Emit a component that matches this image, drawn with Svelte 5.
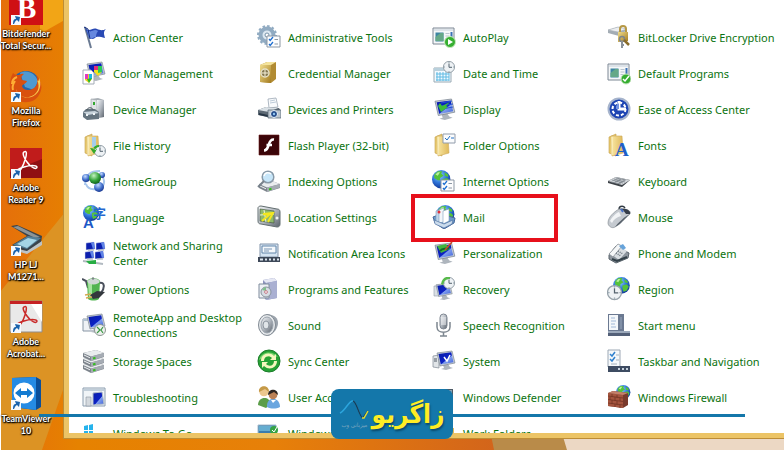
<!--
  App.svelte
  Desktop with a shortcut column, the "All Control Panel Items" window
  and the Zagrio host banner along the bottom.
-->
<script lang="ts">
  interface Glyph {
    text: string;
    x: number;
    y: number;
    size: number;
    fill: string;
    font: string;
  }

  interface Item {
    label: string;
    icon: string;
    marked?: boolean;
  }

  const shortcuts = [
    { lines: ['Bitdefender', 'Total Secur...'], icon: 'bitdefender' },
    { lines: ['Mozilla', 'Firefox'], icon: 'firefox' },
    { lines: ['Adobe', 'Reader 9'], icon: 'reader' },
    { lines: ['HP LJ', 'M1271...'], icon: 'scanner' },
    { lines: ['Adobe', 'Acrobat...'], icon: 'acrobat' },
    { lines: ['TeamViewer', '10'], icon: 'teamviewer' },
  ];

  // Filled row by row, four to a row
  const items: Item[] = [
    { label: 'Action Center', icon: 'flag' },
    { label: 'Administrative Tools', icon: 'admin' },
    { label: 'AutoPlay', icon: 'autoplay' },
    { label: 'BitLocker Drive Encryption', icon: 'bitlocker' },
    { label: 'Color Management', icon: 'color' },
    { label: 'Credential Manager', icon: 'safe' },
    { label: 'Date and Time', icon: 'date' },
    { label: 'Default Programs', icon: 'defaults' },
    { label: 'Device Manager', icon: 'device' },
    { label: 'Devices and Printers', icon: 'printers' },
    { label: 'Display', icon: 'display' },
    { label: 'Ease of Access Center', icon: 'ease' },
    { label: 'File History', icon: 'history' },
    { label: 'Flash Player (32-bit)', icon: 'flash' },
    { label: 'Folder Options', icon: 'folderopts' },
    { label: 'Fonts', icon: 'fonts' },
    { label: 'HomeGroup', icon: 'homegroup' },
    { label: 'Indexing Options', icon: 'indexing' },
    { label: 'Internet Options', icon: 'internet' },
    { label: 'Keyboard', icon: 'keyboard' },
    { label: 'Language', icon: 'language' },
    { label: 'Location Settings', icon: 'location' },
    { label: 'Mail', icon: 'mail', marked: true },
    { label: 'Mouse', icon: 'mouse' },
    { label: 'Network and Sharing Center', icon: 'network' },
    { label: 'Notification Area Icons', icon: 'notify' },
    { label: 'Personalization', icon: 'personal' },
    { label: 'Phone and Modem', icon: 'phone' },
    { label: 'Power Options', icon: 'power' },
    { label: 'Programs and Features', icon: 'programs' },
    { label: 'Recovery', icon: 'recovery' },
    { label: 'Region', icon: 'region' },
    { label: 'RemoteApp and Desktop Connections', icon: 'remote' },
    { label: 'Sound', icon: 'sound' },
    { label: 'Speech Recognition', icon: 'speech' },
    { label: 'Start menu', icon: 'start' },
    { label: 'Storage Spaces', icon: 'storage' },
    { label: 'Sync Center', icon: 'sync' },
    { label: 'System', icon: 'system' },
    { label: 'Taskbar and Navigation', icon: 'taskbar' },
    { label: 'Troubleshooting', icon: 'trouble' },
    { label: 'User Accounts', icon: 'users' },
    { label: 'Windows Defender', icon: 'defender' },
    { label: 'Windows Firewall', icon: 'firewall' },
    { label: 'Windows To Go', icon: 'togo' },
    { label: 'Windows Update', icon: 'update' },
    { label: 'Work Folders', icon: 'work' },
  ];

  // Letters that sit on top of an icon
  const glyphs: Record<string, Glyph[]> = {
    bitdefender: [{ text: 'B', x: 8, y: 26, size: 29, fill: '#fff', font: 'Liberation Serif' }],
    fonts: [{ text: 'A', x: 8, y: 23, size: 19, fill: '#1f5fc6', font: 'Liberation Serif' }],
    language: [
      { text: 'A', x: 1, y: 23, size: 15, fill: '#1d59c7', font: 'Liberation Sans' },
      { text: '字', x: 11, y: 13, size: 13, fill: '#2467cf', font: 'Noto Sans CJK SC' },
    ],
  };
</script>

{#snippet picture(icon: string, cls: string)}
  <svg class={cls} aria-hidden="true">
    <use href="#{icon}" />
    {#each glyphs[icon] ?? [] as g}
      <text x={g.x} y={g.y} font-family={g.font} font-size={g.size} font-weight="700" fill={g.fill}>{g.text}</text>
    {/each}
    {#if cls === 'shortcut-icon'}
      <use href="#p-arrow" transform="translate(2 23)" />
    {/if}
  </svg>
{/snippet}

<svg class="sprite" aria-hidden="true">
  <defs>
    <linearGradient id="steel" x1="0" y1="0" x2="1" y2="1">
      <stop offset="0" stop-color="#f4f6f8" /><stop offset="0.5" stop-color="#b0b6be" /><stop offset="1" stop-color="#5c646d" />
    </linearGradient>
    <linearGradient id="screen" x1="0" y1="0" x2="1" y2="1">
      <stop offset="0" stop-color="#0a1da8" /><stop offset="0.55" stop-color="#0c22c4" /><stop offset="0.6" stop-color="#7f9dee" /><stop offset="1" stop-color="#3c5fd8" />
    </linearGradient>
    <linearGradient id="manila" x1="0" y1="0" x2="1" y2="0">
      <stop offset="0" stop-color="#f9e8a6" /><stop offset="1" stop-color="#dfb95a" />
    </linearGradient>
    <linearGradient id="gold" x1="0" y1="0" x2="1" y2="1">
      <stop offset="0" stop-color="#f0dc8c" /><stop offset="1" stop-color="#a37a1e" />
    </linearGradient>
    <radialGradient id="ocean" cx="0.4" cy="0.3" r="0.8">
      <stop offset="0" stop-color="#8fd0ff" /><stop offset="0.5" stop-color="#2e74d8" /><stop offset="1" stop-color="#0a2688" />
    </radialGradient>
    <radialGradient id="blueball" cx="0.4" cy="0.3" r="0.7">
      <stop offset="0" stop-color="#c5dcff" /><stop offset="0.6" stop-color="#4471cc" /><stop offset="1" stop-color="#1b3a92" />
    </radialGradient>
    <radialGradient id="greenball" cx="0.4" cy="0.3" r="0.7">
      <stop offset="0" stop-color="#c4f3c0" /><stop offset="0.6" stop-color="#36a53c" /><stop offset="1" stop-color="#12631c" />
    </radialGradient>

    <!-- shared parts -->
    <g id="p-globe">
      <circle cx="8" cy="8" r="8" fill="url(#ocean)" />
      <path d="M2 4 5 1 9 1 8 3 10 5 7 7 7 9 5 9 2 7zM9 8l4-1 2 2-2 4-3 1-1-3zM11 2l3 2v2l-3-1z" fill="#55c23a" />
      <path d="M3 4 5 2 7 2 5 5z" fill="#b9f09c" />
    </g>
    <g id="p-monitor">
      <path d="M6 14l5-1 2 3 3 1-7 2-5-1 3-1z" fill="#aeb5bd" />
      <path d="M0 2 15 0 18 12 3 15z" fill="#c7ced6" stroke="#6e7986" stroke-width="0.6" />
      <path d="M1.500 3 14.200 1.300 16.500 11.200 3.800 13.600z" fill="url(#screen)" />
    </g>
    <g id="p-clock">
      <circle cx="6" cy="6" r="5.600" fill="#eef2f5" stroke="#97a2aa" />
      <path d="M6 2.500V6.300H9" fill="none" stroke="#54636e" />
      <path d="M6 1v1M6 10v1M1 6h1M10 6h1" stroke="#8fa0aa" />
    </g>
    <g id="p-list">
      <path d="M0 0h13v11H0z" fill="#fdfdfe" stroke="#8c97a4" />
      <path d="M2 3l1.200 1.500L6 1M2 8l1.200 1.500L6 6" fill="none" stroke="#1f6fd0" stroke-width="1.300" />
      <path d="M7.500 3.500H11M7.500 8H11" stroke="#8d98a5" />
    </g>
    <g id="p-window">
      <path d="M1 3h21v16H1z" fill="#f5f7f8" stroke="#7c8794" />
      <path d="M2 4h19v2H2z" fill="#dde3e9" />
      <path d="M3.500 7.500h8v9h-8z" fill="#3d85a2" /><path d="M3.500 12l5-4h3v8h-8z" fill="#65a887" />
      <path d="M13.500 8.500h4M13.500 11h4M13.500 13.500h3" stroke="#b8c4cf" />
      <path d="M18.500 7h2v8h-2z" fill="#3a71b5" />
    </g>
    <g id="p-folder">
      <path d="M1 3 8 0v22L1 19z" fill="#e9ca72" stroke="#c59e46" stroke-width="0.600" />
      <path d="M3 2h11l1 17-11 3z" fill="url(#manila)" stroke="#cda958" stroke-width="0.600" />
      <path d="M4 3v18" stroke="#fff6cb" />
    </g>
    <g id="p-pc">
      <path d="M0 1l8-1 1 7-9 1z" fill="#0c1fae" stroke="#d6deee" stroke-width="0.500" /><path d="M5 1l3-1 1 6-2 1z" fill="#5f83e6" />
      <path d="M2 8h6" stroke="#9ba4b0" />
    </g>
    <g id="p-disk">
      <path d="M0 3 13 0l8 3v4L8 11 0 7z" fill="#7d848c" />
      <path d="M0 3 13 0l8 3L8 6.500z" fill="#e9ecee" />
      <path d="M8 6.500 21 3v3.500L8 11z" fill="#a5abb3" />
      <path d="M1 5l6 2.800" stroke="#eef0f2" /><path d="M10 8.500l2.500-.7" stroke="#36bd20" stroke-width="2" />
    </g>
    <g id="p-arrow">
      <path d="M0 0h10v10H0z" fill="#f6f9fd" />
      <path d="M2 9C2 5 3 4 5 4L4 1l5 1-1 5-2-2C4 6 4 7 3 9z" fill="#1962ac" />
    </g>
  </defs>

  <!-- control panel icons -->
  <symbol id="flag" viewBox="0 0 24 24">
    <path d="M3 2 9 23" stroke="#6a7a92" stroke-width="2" />
    <path d="M3 3C8 8 10 2 15 4c3 1 5 2 9 0-3 3-2 5-1 9-5-1-8-2-10 0-3 2-5 0-6 0z" fill="#2949b4" />
    <path d="M5 5c5 4 6-2 11 1-2 3-2 5-2 6-3 0-4 3-7 1z" fill="#6688df" />
    <path d="M2 2l4 2 2 10" fill="none" stroke="#152f80" />
  </symbol>
  <symbol id="color" viewBox="0 0 24 24">
    <use href="#p-monitor" transform="translate(5 1)" />
    <path d="M12 5h8v6l-4 4-4-4z" fill="#f4e11d" /><path d="M12 5h4v4h-4z" fill="#e0307a" /><path d="M16 5h4v6l-4 1z" fill="#2bcb5a" />
    <path d="M1 9h8l3 3v11H1z" fill="#fff" stroke="#a3abb5" />
    <path d="M3 13h7v5l-3 4-4-3z" fill="#f4d01d" /><path d="M3 13h3v5H3z" fill="#e23cc0" /><path d="M7 13h3v5l-3 1z" fill="#17b7e8" /><path d="M5 18l5-1-3 5z" fill="#26b535" />
  </symbol>
  <symbol id="device" viewBox="0 0 24 24">
    <path d="M9 2l7-1 6 2v17l-7 1-6-3z" fill="#a9b0b6" /><path d="M9 2l6 1v17l-6-3z" fill="#e0e3e5" stroke="#99a0a6" stroke-width="0.600" /><path d="M15 3h7v17l-7 1z" fill="url(#steel)" />
    <path d="M12 5v3" stroke="#35a832" stroke-width="2" />
    <path d="M1 15l3-3h9l4 3v7l-12 1-4-3z" fill="#65747f" /><path d="M1 15l12-1 4 2-11 2z" fill="#c9d4dc" />
    <path d="M5 13c0-3 6-3 6 0" fill="none" stroke="#4b5660" /><path d="M4 18h2M11 17h2" stroke="#eff4f7" stroke-width="2" />
  </symbol>
  <symbol id="history" viewBox="0 0 24 24">
    <use href="#p-folder" transform="translate(2 1)" />
    <path d="M10 4h4v10h-4z" fill="#a5cdec" />
    <use href="#p-clock" transform="translate(12 12)" />
    <path d="M8 15l4 6 3-5zM11 16c1-3 3-4 6-4v2c-2 0-3 1-3 3z" fill="#35a92b" />
  </symbol>
  <symbol id="homegroup" viewBox="0 0 24 24">
    <path d="M3 16C4 5 8 2 18 2M20 7c4 5 2 10-3 15M14 20C7 21 5 18 4 15" fill="none" stroke="#a8c6ec" stroke-width="2" />
    <circle cx="4" cy="9" r="4" fill="url(#blueball)" /><circle cx="20" cy="6" r="3" fill="url(#blueball)" />
    <circle cx="17" cy="18" r="5" fill="url(#blueball)" /><circle cx="13" cy="9" r="6" fill="url(#greenball)" />
  </symbol>
  <symbol id="language" viewBox="0 0 24 24">
    <use href="#p-globe" transform="translate(1 0)" />
  </symbol>
  <symbol id="network" viewBox="0 0 24 24">
    <use href="#p-pc" transform="translate(4 1)" /><use href="#p-pc" transform="translate(14 1)" />
    <use href="#p-pc" transform="translate(3 10)" /><use href="#p-pc" transform="translate(13 10)" />
    <path d="M1 20l20 3" stroke="#b2bac1" stroke-width="2" /><path d="M4 20l10-1v4l-7 0z" fill="#27ad43" />
  </symbol>
  <symbol id="power" viewBox="0 0 24 24">
    <path d="M0 2l4 2 2 7M17 6c6-2 6 5 2 10" fill="none" stroke="#4a505c" stroke-width="2" />
    <path d="M5 5c0-5 13-5 13 0l-1 17c-3 2-8 2-11 0z" fill="#51b450" /><path d="M6 6h4v15l-3-1z" fill="#a5e59d" />
    <ellipse cx="11.500" cy="4.500" rx="6" ry="3" fill="#cfd7d5" /><circle cx="11" cy="1.500" r="1.200" fill="#798684" />
    <path d="M8 18l7-4 8 1-6 6-6 1z" fill="#34383d" /><path d="M3 18l6-1M4 21l6-1" stroke="#d5a952" stroke-width="1.500" />
  </symbol>
  <symbol id="remote" viewBox="0 0 24 24">
    <path d="M1 6h14v12H1z" fill="#eff2f5" stroke="#8795a4" /><path d="M1 6h14v2H1z" fill="#b2c2d1" />
    <use href="#p-monitor" transform="translate(5 1)" />
    <circle cx="18" cy="17" r="5.500" fill="#edf0ee" stroke="#8b9690" /><path d="M15 14l3 3-3 3M21 14l-2 3 2 3" fill="none" stroke="#3c9845" stroke-width="1.200" />
  </symbol>
  <symbol id="storage" viewBox="0 0 24 24">
    <use href="#p-disk" transform="translate(1 13)" /><use href="#p-disk" transform="translate(1 7)" /><use href="#p-disk" transform="translate(1 1)" />
  </symbol>
  <symbol id="trouble" viewBox="0 0 24 24">
    <path d="M1 3h22v18H1z" fill="#f0f4f7" stroke="#8b9daf" /><path d="M2 4h20v2H2z" fill="#c1ced9" />
    <path d="M4 12h5v9H4z" fill="#d4d9de" stroke="#8b949e" stroke-width="0.600" /><path d="M11 8l9-1 2 12-11 1z" fill="url(#screen)" stroke="#b1bcc9" />
  </symbol>
  <symbol id="togo" viewBox="0 0 24 24">
    <path d="M2 5l4-1v5H2zM7 4l4-1v6H7zM2 10h4v5l-4-1zM7 10h4v6l-4-1z" fill="#26b3ec" />
  </symbol>

  <symbol id="admin" viewBox="0 0 24 24">
    <circle cx="10" cy="10" r="6.500" fill="#dbe7f1" stroke="#91abc2" stroke-width="4" />
    <circle cx="10" cy="10" r="9" fill="none" stroke="#91abc2" stroke-width="2" stroke-dasharray="2.500 2.200" />
    <circle cx="10" cy="10" r="2" fill="#fff" stroke="#7591a8" />
    <use href="#p-list" transform="translate(10 11)" />
  </symbol>
  <symbol id="safe" viewBox="0 0 24 24">
    <path d="M3 4 10 1h9v17l-5 4-11-1z" fill="#b18b33" /><path d="M3 4h11v18l-11-1z" fill="url(#gold)" /><path d="M3 4 10 1h9l-5 3z" fill="#f4e39c" />
    <circle cx="8" cy="12" r="4" fill="#847852" stroke="#e8e2c7" stroke-width="1.500" /><path d="M5 12h6M8 9v6" stroke="#f8f2d8" />
  </symbol>
  <symbol id="printers" viewBox="0 0 24 24">
    <path d="M11 2l8-1 2 9-9 1z" fill="#f8fafc" stroke="#8f9caa" stroke-width="0.700" /><path d="M13 4l5-1M13 6l6-1" stroke="#bccad7" />
    <path d="M1 13l8-3 13 1 2 3v6l-9 1-14-3z" fill="#5d6974" /><path d="M1 13l8-3 12 1-9 4z" fill="#d9e0e5" /><path d="M2 16l9 2v2l-9-2z" fill="#283746" />
    <path d="M11 13h13v8H11z" fill="#bdc6ce" stroke="#4e5e6d" stroke-width="0.700" /><circle cx="17" cy="17" r="3.500" fill="#244c8b" stroke="#edf4f9" /><circle cx="17" cy="17" r="1.200" fill="#90c4f0" />
  </symbol>
  <symbol id="flash" viewBox="0 0 24 24">
    <path d="M2 2h20v20H2z" fill="#3b0508" stroke="#65171a" stroke-width="0.600" />
    <path d="M17 6.500c-4-.5-4.500 3-5.500 6s-2 5-4.500 5M9.500 12H15" fill="none" stroke="#fff" stroke-width="2.600" />
  </symbol>
  <symbol id="indexing" viewBox="0 0 24 24">
    <use href="#p-disk" transform="translate(2 12)" />
    <circle cx="11" cy="8" r="5.800" fill="#c7e6f9" stroke="#899aa8" stroke-width="1.500" /><path d="M7 7c1-4 5-4 7-2" fill="none" stroke="#fff" stroke-width="1.500" />
    <path d="M7 12l-6 6" stroke="#77818b" stroke-width="2" />
  </symbol>
  <symbol id="location" viewBox="0 0 24 24">
    <path d="M1 3c0-1 1-2 3-2l16 3c2 0 3 1 3 3v12c0 2-1 3-3 3L4 19c-2 0-3-1-3-3z" fill="url(#steel)" stroke="#636e70" />
    <path d="M3 4l14 2v12L3 16z" fill="#8fb96c" stroke="#40503c" stroke-width="0.600" /><path d="M3 10l14-1M7 5l2 12" stroke="#eef6e0" />
    <path d="M5 16l7-6-6-1 10-1-5 9" fill="none" stroke="#f3e720" stroke-width="2" /><circle cx="20" cy="13" r="1.500" fill="#eff2f2" />
  </symbol>
  <symbol id="notify" viewBox="0 0 24 24">
    <path d="M3 3h18v13H3z" fill="#d5e4f2" stroke="#8294ab" /><path d="M5 5h14v7H5z" fill="#f4f8fc" stroke="#6286aa" /><path d="M7 8h8M7 10h5" stroke="#7995b5" />
    <path d="M1 16h22v5H1z" fill="#3d4858" /><path d="M3 18.500h3M8 18.500h2M12 18.500h2M16 18.500h2M20 18.500h2" stroke="#dce4ed" stroke-width="2" />
  </symbol>
  <symbol id="programs" viewBox="0 0 24 24">
    <path d="M6 3l11-2 3 3v17l-11 2-3-4z" fill="#8d94bd" /><path d="M6 3l11-2 3 3-11 2z" fill="#e5e7f3" /><path d="M9 6l11-2v17L9 23z" fill="#aab0d2" />
    <path d="M2 7h10v14H2z" fill="#edf0f4" stroke="#7f8b9c" /><circle cx="9" cy="15" r="5" fill="#d7dce3" stroke="#88939e" /><path d="M5 13a5 5 0 0 1 4-3l0 4z" fill="#7fbf8b" /><circle cx="9" cy="15" r="1.400" fill="#fff" stroke="#b54b5c" stroke-width="0.700" />
  </symbol>
  <symbol id="sound" viewBox="0 0 24 24">
    <path d="M10 1c8 1 11 4 11 9s-4 11-10 13z" fill="#9ba3ac" /><ellipse cx="10" cy="12" rx="8.500" ry="10.500" fill="#e4e7ea" stroke="#828b94" />
    <ellipse cx="10" cy="12" rx="6" ry="8" fill="url(#steel)" stroke="#9ca5ae" /><ellipse cx="9" cy="12" rx="3" ry="4" fill="#e0e5e9" stroke="#8b949d" />
  </symbol>
  <symbol id="sync" viewBox="0 0 24 24">
    <circle cx="12" cy="12" r="11" fill="#26a235" stroke="#1c7d2a" /><path d="M2 11C4 2 16 1 21 8c-6-2-12-1-19 3z" fill="#76d46b" />
    <path d="M4 12C4 5 12 2 17 7l2-2v6h-6l2-2c-3-3-8-2-8 3zM20 12c0 7-8 10-13 5l-2 2v-6h6l-2 2c3 3 8 2 8-3z" fill="#f4f6bd" />
  </symbol>
  <symbol id="users" viewBox="0 0 24 24">
    <path d="M1 20c0-8 11-10 13-1l-5 4z" fill="#5b9d49" /><circle cx="7" cy="6.500" r="4.800" fill="#ecc78e" /><path d="M2 7c-1-7 10-8 10 0L8 4z" fill="#c59a48" />
    <path d="M10 22c-1-11 13-11 13 0-4 2-9 2-13 0z" fill="#6aa6df" /><circle cx="16" cy="10" r="4.300" fill="#bb8156" /><path d="M11 10c0-7 10-7 10 0l-4-3z" fill="#2d2521" /><path d="M14 15l2 3 3-3" fill="#fff" />
  </symbol>
  <symbol id="update" viewBox="0 0 24 24">
    <path d="M1 4h18v15H1z" fill="#397cae" stroke="#a7bdcc" /><path d="M2 5h16v5H2z" fill="#65add0" /><circle cx="17" cy="9" r="4" fill="#37a344" /><path d="M15 9l2 2 3-5" fill="none" stroke="#fff" />
  </symbol>

  <symbol id="autoplay" viewBox="0 0 24 24">
    <use href="#p-window" /><circle cx="18" cy="17" r="5.500" fill="#36af31" stroke="#c9e9bf" /><path d="M16 14l5 3-5 3z" fill="#fff" />
  </symbol>
  <symbol id="date" viewBox="0 0 24 24">
    <path d="M2 7h17v14H2z" fill="#f3faff" stroke="#99aab4" /><path d="M2 7h17v3H2z" fill="#b9d0dc" />
    <path d="M4 13h13M4 16h13M4 19h13M5 11v9M8 11v9M11 11v9M14 11v9M17 11v9" stroke="#61bbe3" />
    <use href="#p-clock" transform="translate(11 0)" />
  </symbol>
  <symbol id="display" viewBox="0 0 24 24">
    <use href="#p-monitor" transform="translate(3 2) scale(1.100)" /><path d="M9 6l11-2M9 9l12-2M10 12l11-2" stroke="#2350d4" /><path d="M6 9l3 6 7-5-2-1 4-4-8 4-2-3z" fill="#3dbd39" />
  </symbol>
  <symbol id="folderopts" viewBox="0 0 24 24">
    <use href="#p-folder" transform="translate(2 1)" /><g transform="translate(11 1)"><path d="M0 0h12v9H0z" fill="#fbfcfd" stroke="#919cab" /><path d="M2 4l2 2 3-4M8 4h3" fill="none" stroke="#2271c5" /></g>
  </symbol>
  <symbol id="internet" viewBox="0 0 24 24">
    <use href="#p-globe" transform="translate(0 1) scale(1.150)" /><use href="#p-list" transform="translate(9 11)" />
  </symbol>
  <symbol id="mail" viewBox="0 0 24 24">
    <use href="#p-globe" transform="translate(4 0) scale(1.150)" />
    <path d="M1 12l8-3 14 4-1 5-10 6-9-6z" fill="#6b9acb" stroke="#46689a" /><path d="M4 6l5-2v12l-5 2z" fill="#bfd5ea" stroke="#7d9dbe" stroke-width="0.600" /><path d="M7 5l5-2v14l-5 1z" fill="#f2f6fa" stroke="#7d9dbe" stroke-width="0.600" /><path d="M11 6l6-2v12l-6 3z" fill="#fff" stroke="#7d9dbe" stroke-width="0.600" />
    <path d="M2 15l10 4 9-4-1 4-8 4-9-4z" fill="#cbdced" stroke="#46689a" stroke-width="0.600" /><circle cx="7" cy="7" r="1.500" fill="#df303b" />
  </symbol>
  <symbol id="personal" viewBox="0 0 24 24">
    <use href="#p-monitor" transform="translate(3 2) scale(1.100)" /><path d="M5 5l9-2 4 5-9 4z" fill="#41b43c" /><path d="M8 10c3-4 4-1 9-3" fill="none" stroke="#12672c" stroke-width="2" /><path d="M13 9L20 1" stroke="#c74b29" stroke-width="1.500" />
  </symbol>
  <symbol id="recovery" viewBox="0 0 24 24">
    <path d="M2 9h5v10H2z" fill="#dae0e5" stroke="#929ca7" stroke-width="0.600" /><use href="#p-monitor" transform="translate(4 6) scale(0.900)" /><use href="#p-clock" transform="translate(11 0)" /><path d="M9 7C10 1 14-1 18 0v2c-4 0-6 2-7 6z" fill="#58b94b" />
  </symbol>
  <symbol id="speech" viewBox="0 0 24 24">
    <rect x="8" y="1" width="7" height="15" rx="3.500" fill="url(#steel)" stroke="#7e8691" /><path d="M9 5h5M9 7h5M9 9h5M9 11h5" stroke="#f4f5f7" />
    <path d="M5 9v5c0 7 13 7 13 0V9M11.500 19v4M8 23h7" fill="none" stroke="#7e8790" stroke-width="1.500" />
  </symbol>
  <symbol id="system" viewBox="0 0 24 24">
    <path d="M1 7l6-1v13l-6-1z" fill="#e1e5e8" stroke="#7e8892" stroke-width="0.700" /><path d="M2 10h3M2 12h3" stroke="#4e5964" /><use href="#p-monitor" transform="translate(5 2)" /><path d="M12 8l3 4 3-6" fill="none" stroke="#fff" stroke-width="1.500" />
  </symbol>
  <symbol id="defender" viewBox="0 0 24 24">
    <path d="M3 4h18v13H3z" fill="#4d5a66" /><path d="M4 5h16v10H4z" fill="#8ca2b3" />
  </symbol>
  <symbol id="work" viewBox="0 0 24 24"><path d="M2 5h9l2 2h9v14H2z" fill="url(#manila)" /></symbol>

  <symbol id="bitlocker" viewBox="0 0 24 24">
    <path d="M1 5 11 2l9 3-8 6-11-3z" fill="#a4adb5" /><path d="M1 5l10-3 9 2-9 3z" fill="#eceef0" stroke="#a4adb5" stroke-width="0.600" />
    <path d="M13 7V4c0-4 6-4 6 0v3" fill="none" stroke="#b69846" stroke-width="2" /><path d="M11 7h10v9l-10 1z" fill="url(#gold)" />
    <circle cx="15" cy="14" r="2.500" fill="none" stroke="#7c858c" stroke-width="1.500" /><path d="M15 16v7M15 20h2" stroke="#8a9198" stroke-width="2" /><path d="M17 15l5 5" stroke="#8b6d2b" stroke-width="2.500" />
  </symbol>
  <symbol id="defaults" viewBox="0 0 24 24">
    <use href="#p-window" /><circle cx="19" cy="18" r="5" fill="#35ad30" stroke="#c5e5bf" /><path d="M16 18l2 2 4-5" fill="none" stroke="#fff" stroke-width="1.500" />
  </symbol>
  <symbol id="ease" viewBox="0 0 24 24">
    <circle cx="12" cy="12" r="10.500" fill="#1d45b3" stroke="#a6b4cc" stroke-width="2" /><circle cx="12" cy="12" r="6.500" fill="none" stroke="#fff" stroke-width="2" stroke-dasharray="3 2" />
    <path d="M12 4v8h7" fill="none" stroke="#fff" stroke-width="3" /><path d="M9 9l3-3v6H9z" fill="#7294e2" />
  </symbol>
  <symbol id="fonts" viewBox="0 0 24 24">
    <use href="#p-folder" transform="translate(1 1)" />
  </symbol>
  <symbol id="keyboard" viewBox="0 0 24 24">
    <path d="M1 12 9 8l14 3-8 7-14-4z" fill="#3d4247" /><path d="M1 12 9 8l14 3-8 5z" fill="#d2d6da" /><path d="M5 11l11 3M7 10l11 3M9 9l10 2M4 13l10 2M8 13l6-3M12 14l6-3" stroke="#777f86" stroke-width="0.800" />
  </symbol>
  <symbol id="mouse" viewBox="0 0 24 24">
    <path d="M13 6c-3-5 3-6 5-3" fill="none" stroke="#303942" stroke-width="1.500" />
    <path d="M1 18c0-6 6-11 11-14 7-1 13 2 11 5-6 5-9 10-15 13-3 2-7-1-7-4z" fill="#c5cad0" stroke="#7d858c" stroke-width="0.600" />
    <path d="M3 16c2-4 6-8 9-9l2 4c-4 1-7 3-9 7z" fill="#f2f4f6" />
    <path d="M23 9c-6 5-9 10-15 13 3-4 8-9 13-12z" fill="#59626c" /><path d="M12 4l4 1 3 4 4 0c1-4-4-6-11-5z" fill="#363d49" /><path d="M14 4l2 3" stroke="#456ec6" stroke-width="2" />
  </symbol>
  <symbol id="phone" viewBox="0 0 24 24">
    <path d="M2 14 9 5l13 7-1 5-12 5-7-4z" fill="#8d959d" stroke="#59636b" /><path d="M4 13l8-8 8 5-8 9z" fill="#d8dde1" /><path d="M2 13l9-10 4 2L6 16z" fill="#f5f7f8" stroke="#7e878f" stroke-width="0.700" />
    <path d="M12 5l4-2 3 4-3 2z" fill="#67a3da" /><path d="M11 10l5 3M9 12l5 3" stroke="#6e7881" stroke-width="1.500" stroke-dasharray="1 1" /><path d="M5 18l5 2 10-4" fill="none" stroke="#334149" stroke-width="2" />
  </symbol>
  <symbol id="region" viewBox="0 0 24 24">
    <use href="#p-globe" transform="translate(6 0) scale(1.050)" /><use href="#p-clock" transform="translate(0 8) scale(1.250)" />
  </symbol>
  <symbol id="start" viewBox="0 0 24 24">
    <path d="M1 1h16v18H1z" fill="#6b7991" /><path d="M2 2h9v15H2z" fill="#f4f7fa" /><path d="M4 5h4M4 8h5M4 11h4M4 14h5" stroke="#a0b8d7" /><path d="M13 4h2v12h-2z" fill="#8190a7" /><path d="M1 18h22v5H1z" fill="#536078" /><path d="M1 18h22v2H1z" fill="#9ca9bb" />
  </symbol>
  <symbol id="taskbar" viewBox="0 0 24 24">
    <path d="M1 1h12v17H1z" fill="#f5f8fa" stroke="#9da8b5" /><path d="M3 5l2 2 3-4M3 10l2 2 3-4" fill="none" stroke="#3081ce" stroke-width="1.500" /><path d="M9 6h3M9 11h3M4 15h6" stroke="#a6b1bd" /><path d="M1 17h22v6H1z" fill="#3e4c62" /><path d="M11 20h2M15 20h2M19 20h2" stroke="#c6d1dd" stroke-width="2" />
  </symbol>
  <symbol id="firewall" viewBox="0 0 24 24">
    <use href="#p-globe" transform="translate(9 0) scale(0.900)" />
    <path d="M1 8 6 6l15 2v12l-5 3-15-2z" fill="#793a2c" /><path d="M1 8l15 2v13L1 21z" fill="#a4543e" /><path d="M1 11l15 2M1 14.500l15 2M1 18l15 2M5 9v3M10 10v3M3 12v3M8 12v4M13 13v3M5 15v4M10 16v4M8 19v3M13 20v3" stroke="#743524" stroke-width="0.800" /><path d="M1 8l5-2 15 2-5 2z" fill="#c4806a" />
  </symbol>

  <!-- desktop shortcut icons -->
  <symbol id="bitdefender" viewBox="0 0 34 34">
    <path d="M0 0h34v33H0z" fill="#cf1014" />
  </symbol>
  <symbol id="firefox" viewBox="0 0 34 34">
    <circle cx="17" cy="16" r="14" fill="#2466ac" /><path d="M11 4c7-4 15 0 18 8l-4 9-9-3z" fill="#4f9ad2" />
    <path d="M4 4c2 2 4 2 6 2 3-2 5-1 5-1-3 2-3 4-2 6l5 1c-1 3-4 3-5 5 1 5 8 5 12 2 4-3 4-8 2-13 6 6 7 14 3 20-5 9-18 9-25 3C-1 22 0 11 4 4z" fill="#d9500f" />
    <path d="M28 11c4 8 0 15-8 17-6 1-11-2-13-8 1 8 15 13 22 3 3-5 3-10 1-14 0 3-1 4-2 2z" fill="#f9cd52" /><path d="M3 15c0-4 2-6 5-7M4 21c-1-3 0-6 2-9" fill="none" stroke="#ffae34" stroke-width="2" />
  </symbol>
  <symbol id="reader" viewBox="0 0 34 34">
    <path d="M1 2h32v30H1z" fill="#8f0f12" /><path d="M1 2h32v11L1 26z" fill="#c01c1b" />
    <path d="M15 6c3-2 3 2 1 8-2 7-6 13-8 13-2 0-1-4 7-6 6-2 12-2 13 0 0 3-6 1-10-5-3-4-5-9-3-10z" fill="none" stroke="#fff" stroke-width="1.500" />
  </symbol>
  <symbol id="scanner" viewBox="0 0 34 34">
    <path d="M2 3l6-1 25 11-1 7-15 9L3 22l15-9z" fill="#39434b" /><path d="M4 4l5-1 22 11-5 1z" fill="#8d9496" /><path d="M4 22l15-9 13 2-14 11z" fill="#547f97" /><path d="M8 21l11-6 9 2-10 8z" fill="#a5d5e6" /><path d="M4 25l14 3 15-10v4l-15 9-14-4z" fill="#bcc3c5" />
  </symbol>
  <symbol id="acrobat" viewBox="0 0 34 34">
    <path d="M1 1h32v31H1z" fill="#e9e9e9" stroke="#918c87" /><path d="M1 1h32v3H1z" fill="#c52224" /><path d="M22 4h11v18z" fill="#fff" />
    <path d="M15 7c3-2 3 2 1 8-2 7-6 12-8 12-2 0-1-4 7-6 6-2 12-2 13 0 0 3-6 1-10-5-3-4-5-8-3-9z" fill="none" stroke="#c92a29" stroke-width="1.500" />
  </symbol>
  <symbol id="teamviewer" viewBox="0 0 34 34">
    <path d="M3 1l24-1 5 3v27l-5 3-24-3z" fill="#0b4f9a" /><path d="M3 1l24-1v33L3 30z" fill="#258be4" /><circle cx="15" cy="16" r="10.500" fill="#fff" />
    <path d="M6 16l6-5v3h6v-3l6 5-6 5v-3h-6v3z" fill="#137bd1" />
  </symbol>
</svg>

<div class="desktop">
  <svg class="wallpaper" viewBox="0 0 784 450" preserveAspectRatio="none" aria-hidden="true">
    <defs>
      <linearGradient id="sunset" x1="0" y1="0" x2="1" y2="0">
        <stop offset="0" stop-color="#e56f0b" /><stop offset="0.100" stop-color="#e68200" /><stop offset="0.350" stop-color="#e78009" /><stop offset="0.630" stop-color="#d3651b" />
      </linearGradient>
    </defs>
    <path d="M0 0h784v450H0z" fill="url(#sunset)" />
    <path d="M40 0h30v17L40 34z" fill="#f2a516" />
    <path d="M70 206 0 292v158h42l28-80z" fill="#dc9324" />
    <path d="M490 430h76l6 20h-78z" fill="#b98b49" />
    <path d="M561 430h223v20H567z" fill="#ecd8c4" />
    <path d="M0 0h1v450H0z" fill="#fff" />
  </svg>

  <nav class="shortcuts" aria-label="Desktop">
    {#each shortcuts as s}
      <button type="button" class="shortcut">
        {@render picture(s.icon, 'shortcut-icon')}
        {#each s.lines as line}
          <span>{line}</span>
        {/each}
      </button>
    {/each}
  </nav>

  <main class="window">
    <ul class="items">
      {#each items as item}
        <li class:marked={item.marked}>
          <a href="#{item.icon}">
            {@render picture(item.icon, 'item-icon')}
            <span>{item.label}</span>
          </a>
        </li>
      {/each}
    </ul>
  </main>

  <footer class="banner">
    <div class="logo" lang="fa" dir="rtl">
      <strong>زاگریو</strong>
      <div class="tagline">
        <svg viewBox="0 0 30 22" aria-hidden="true">
          <path d="M1 14C7 11 10 1 14 2s6 16 10 17" fill="none" stroke="#2ca5dd" stroke-width="1.500" />
          <path d="M14 2c4 1 6 16 10 17l5-7" fill="none" stroke="#17405c" stroke-width="1.500" />
          <path d="M23 19h2l4-7" fill="none" stroke="#e3dc35" stroke-width="1.500" />
        </svg>
        <small>میزبانی وب</small>
      </div>
    </div>
  </footer>
</div>

<style>
  :global(body) {
    margin: 0;
  }

  .sprite {
    position: absolute;
    width: 0;
    height: 0;
  }

  .desktop {
    position: relative;
    display: flex;
    align-items: flex-start;
    height: 100vh;
    overflow: hidden;
    background: #e68200;
    font-family: 'Noto Sans', 'Open Sans', sans-serif;
  }

  .wallpaper {
    position: absolute;
    inset: 0;
    width: 100%;
    height: 100%;
  }

  /* ── Desktop shortcuts ── */
  .shortcuts {
    position: relative;
    display: flex;
    flex-direction: column;
    gap: 17px;
    flex: 0 0 52px;
    min-width: 0;
    margin: -8px 12px 0 0;
  }

  .shortcut {
    display: flex;
    flex-direction: column;
    align-items: center;
    padding: 0;
    border: 0;
    background: none;
    color: #fff;
    font-family: Lato, sans-serif;
    font-size: 9px;
    font-weight: 700;
    line-height: 12px;
    white-space: nowrap;
    text-shadow: 0 1px 2px #000, 1px 1px 1px #000, 0 0 2px #000;
  }

  .shortcut-icon {
    width: 34px;
    height: 34px;
    margin-bottom: 2px;
    overflow: visible;
    text-shadow: none;
  }

  /* ── Control panel window ── */
  .window {
    position: relative;
    box-sizing: border-box;
    flex: 1;
    min-width: 0;
    height: calc(100vh - 12px);
    overflow: hidden;
    border: solid #ecc466;
    border-width: 0 0 5px 5px;
    outline: 1px solid #bd8d36;
    background: #fff;
  }

  .items {
    display: grid;
    grid-template-columns: repeat(4, 1fr);
    grid-auto-rows: 36px;
    margin: 0;
    padding: 19px 2px 0 13px;
    list-style: none;
  }

  .items li {
    position: relative;
    display: flex;
    align-items: center;
  }

  .items a {
    display: flex;
    align-items: center;
    gap: 7px;
    color: #0b730f;
    font-size: 11px;
    line-height: 15px;
    text-decoration: none;
  }

  .items a span {
    max-width: 142px;
  }

  .item-icon {
    flex-shrink: 0;
    width: 24px;
    height: 24px;
    overflow: visible;
  }

  .marked::after {
    content: '';
    position: absolute;
    inset: -5px 49px -7px -21px;
    border: 4px solid #e7101b;
    pointer-events: none;
  }

  /* ── Host banner ── */
  .banner {
    position: absolute;
    right: 39px;
    bottom: 11px;
    left: 39px;
    display: flex;
    justify-content: center;
  }

  .banner::before {
    content: '';
    position: absolute;
    top: 25px;
    right: 0;
    left: 0;
    height: 3px;
    background: #1477aa;
  }

  .logo {
    position: relative;
    display: flex;
    align-items: center;
    justify-content: center;
    gap: 2px;
    box-sizing: border-box;
    width: 122px;
    height: 50px;
    border-radius: 8px;
    background: #1477aa;
    font-family: 'DejaVu Sans Condensed', 'DejaVu Sans', sans-serif;
  }

  .logo strong {
    color: #ffed24;
    font-size: 26px;
    line-height: 40px;
    text-shadow: 1px 2px 2px #0b4a6c;
  }

  .tagline {
    display: flex;
    flex-direction: column;
    align-items: center;
  }

  .tagline svg {
    width: 30px;
    height: 22px;
  }

  .tagline small {
    color: #7ba6bf;
    font-size: 6px;
    line-height: 8px;
    white-space: nowrap;
  }
</style>
